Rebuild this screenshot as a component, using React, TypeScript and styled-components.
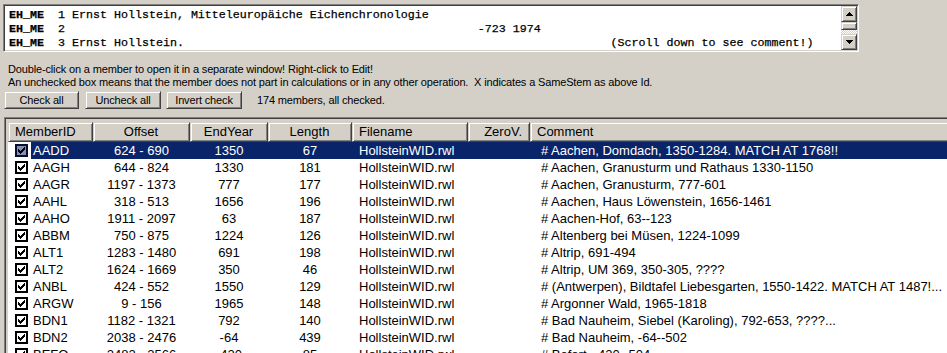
import React from 'react';
import styled, { createGlobalStyle, css } from 'styled-components';

const Global = createGlobalStyle`
  html, body { margin: 0; padding: 0; background: #d4d0c8; overflow: hidden; }
  body { font-family: "Liberation Sans", Arial, sans-serif; }
`;

const Page = styled.div`
  width: 947px;
  height: 353px;
  overflow: hidden;
  box-sizing: border-box;
  padding: 4px 0 0 3px;
  display: flex;
  flex-direction: column;
`;

const Memo = styled.div`
  width: 856px;
  height: 48px;
  flex: none;
  box-sizing: border-box;
  border: 1px solid;
  border-color: #808080 #ffffff #ffffff #808080;
  box-shadow: inset 1px 1px #404040, inset -1px -1px #d4d0c8;
  background: #fff;
  padding: 1px;
  display: flex;
`;

const MemoText = styled.pre`
  flex: 1;
  margin: 0;
  padding: 2px 0 0 4px;
  font-family: "Liberation Mono", "Courier New", monospace;
  font-size: 11.67px;
  line-height: 14px;
  color: #000;
  -webkit-text-stroke: 0.25px #000;
  overflow: hidden;
`;

const Bold = styled.b`
  font-weight: bold;
`;

const VScroll = styled.div`
  width: 16px;
  display: flex;
  flex-direction: column;
`;

const raised = css`
  box-sizing: border-box;
  background: #d4d0c8;
  border: 1px solid;
  border-color: #d4d0c8 #404040 #404040 #d4d0c8;
  box-shadow: inset 1px 1px #ffffff, inset -1px -1px #808080;
`;

const ScrollBtn = styled.div`
  ${raised};
  height: 16px;
  flex: none;
  display: flex;
  align-items: center;
  justify-content: center;
`;

const Thumb = styled.div`
  ${raised};
  height: 8px;
  flex: none;
`;

const Track = styled.div`
  flex: 1;
  background-color: #d4d0c8;
  background-image: repeating-conic-gradient(#ffffff 0 25%, #d4d0c8 0 50%);
  background-size: 2px 2px;
`;

const Info = styled.div`
  margin-top: 11px;
  padding-left: 5px;
  font-size: 11px;
  letter-spacing: -0.15px;
  line-height: 13px;
  color: #000;
`;

const ButtonRow = styled.div`
  margin-top: 2px;
  margin-left: 1px;
  display: flex;
  align-items: center;
  height: 18px;
`;

const Button = styled.button<{ $w: number; $gap: number }>`
  ${raised};
  width: ${(p) => p.$w}px;
  height: 18px;
  margin-right: ${(p) => p.$gap}px;
  padding: 0;
  font-family: "Liberation Sans", Arial, sans-serif;
  font-size: 11px;
  letter-spacing: -0.15px;
  color: #000;
`;

const Status = styled.span`
  margin-left: 10px;
  font-size: 11px;
  letter-spacing: -0.15px;
  color: #000;
`;

const Frame = styled.div`
  margin-top: 8px;
  margin-left: 1px;
  width: 1000px;
  flex: 1;
  box-sizing: border-box;
  border-top: 1px solid #808080;
  border-left: 1px solid #808080;
  box-shadow: inset 1px 1px #404040;
  padding: 4px 0 0 3px;
  display: flex;
  flex-direction: column;
`;

const COLS = '23px 62px 97px 78px 84px 116px 62px 1fr';

const HeaderRow = styled.div`
  display: grid;
  grid-template-columns: 85px 97px 78px 84px 116px 62px 1fr;
  height: 20px;
  flex: none;
`;

const HeadCell = styled.div<{ $align: 'left' | 'center' | 'right' }>`
  ${raised};
  font-size: 13px;
  line-height: 18px;
  color: #000;
  text-align: ${(p) => p.$align};
  padding: 0 7px 0 6px;
  white-space: nowrap;
  overflow: hidden;
`;

const Body = styled.div`
  flex: 1;
  background: #fff;
`;

const Row = styled.div`
  display: grid;
  grid-template-columns: ${COLS};
  height: 17px;
  font-size: 13px;
  line-height: 17px;
`;

const CheckCell = styled.div`
  background: #fff;
  display: flex;
  align-items: center;
  padding-left: 7px;
`;

const Box = styled.div<{ $sel: boolean }>`
  width: 13px;
  height: 13px;
  box-sizing: border-box;
  border: 2px solid ${(p) => (p.$sel ? '#050f30' : '#000')};
  background: ${(p) => (p.$sel ? '#8790b3' : '#fff')};
  display: flex;
  align-items: center;
  justify-content: center;
`;

const Cell = styled.div<{ $sel: boolean; $align: 'left' | 'center' | 'right'; $pl?: number }>`
  background: ${(p) => (p.$sel ? '#0a246a' : '#fff')};
  color: ${(p) => (p.$sel ? '#fff' : '#000')};
  text-align: ${(p) => p.$align};
  padding-left: ${(p) => p.$pl ?? 0}px;
  white-space: nowrap;
  overflow: hidden;
`;

type Member = [string, string, string, string, string];

const members: Member[] = [
  ['AADD', '624 - 690', '1350', '67', '# Aachen, Domdach, 1350-1284. MATCH AT 1768!!'],
  ['AAGH', '644 - 824', '1330', '181', '# Aachen, Granusturm und Rathaus 1330-1150'],
  ['AAGR', '1197 - 1373', '777', '177', '# Aachen, Granusturm, 777-601'],
  ['AAHL', '318 - 513', '1656', '196', '# Aachen, Haus Löwenstein, 1656-1461'],
  ['AAHO', '1911 - 2097', '63', '187', '# Aachen-Hof, 63--123'],
  ['ABBM', '750 - 875', '1224', '126', '# Altenberg bei Müsen, 1224-1099'],
  ['ALT1', '1283 - 1480', '691', '198', '# Altrip, 691-494'],
  ['ALT2', '1624 - 1669', '350', '46', '# Altrip, UM 369, 350-305, ????'],
  ['ANBL', '424 - 552', '1550', '129', '# (Antwerpen), Bildtafel Liebesgarten, 1550-1422. MATCH AT 1487!...'],
  ['ARGW', '9 - 156', '1965', '148', '# Argonner Wald, 1965-1818'],
  ['BDN1', '1182 - 1321', '792', '140', '# Bad Nauheim, Siebel (Karoling), 792-653, ????...'],
  ['BDN2', '2038 - 2476', '-64', '439', '# Bad Nauheim, -64--502'],
  ['BEFO', '2482 - 2566', '-420', '85', '# Befort, -420--504'],
];

const Check = () => (
  <svg width="7" height="7" viewBox="0 0 7 7">
    <path d="M0 2h1v1h1v1h1V3h1V2h1V1h1V0h1v3H6v1H5v1H4v1H3v1H2V6H1V5H0z" fill="#000" />
  </svg>
);

const line = (a: string, b: string, col: number) => a + ' '.repeat(Math.max(1, col - a.length)) + b;

export default function App() {
  const l2 = line('  2', '-723 1974', 62);
  const l3 = line('  3 Ernst Hollstein.', '(Scroll down to see comment!)', 81);
  return (
    <>
      <Global />
      <Page>
        <Memo>
          <MemoText>
            <Bold>EH_ME</Bold>{'  1 Ernst Hollstein, Mitteleuropäiche Eichenchronologie'}
            {'\n'}
            <Bold>EH_ME</Bold>{l2}
            {'\n'}
            <Bold>EH_ME</Bold>{l3}
          </MemoText>
          <VScroll>
            <ScrollBtn>
              <svg width="7" height="4" viewBox="0 0 7 4"><path d="M3 0h1v1h1v1h1v1h1v1H0V3h1V2h1V1h1z" fill="#000" /></svg>
            </ScrollBtn>
            <Thumb />
            <Track />
            <ScrollBtn>
              <svg width="7" height="4" viewBox="0 0 7 4"><path d="M0 0h7v1H6v1H5v1H4v1H3V3H2V2H1V1H0z" fill="#000" /></svg>
            </ScrollBtn>
          </VScroll>
        </Memo>
        <Info>
          Double-click on a member to open it in a separate window! Right-click to Edit!
          <br />
          An unchecked box means that the member does not part in calculations or in any other operation.&nbsp; X indicates a SameStem as above Id.
        </Info>
        <ButtonRow>
          <Button $w={75} $gap={6}>Check all</Button>
          <Button $w={76} $gap={5}>Uncheck all</Button>
          <Button $w={76} $gap={5}>Invert check</Button>
          <Status>174 members, all checked.</Status>
        </ButtonRow>
        <Frame>
          <HeaderRow>
            <HeadCell $align="left">MemberID</HeadCell>
            <HeadCell $align="center">Offset</HeadCell>
            <HeadCell $align="center">EndYear</HeadCell>
            <HeadCell $align="center">Length</HeadCell>
            <HeadCell $align="left">Filename</HeadCell>
            <HeadCell $align="right">ZeroV.</HeadCell>
            <HeadCell $align="left">Comment</HeadCell>
          </HeaderRow>
          <Body>
            {members.map((m, i) => {
              const sel = i === 0;
              return (
                <Row key={m[0]}>
                  <CheckCell>
                    <Box $sel={sel}><Check /></Box>
                  </CheckCell>
                  <Cell $sel={sel} $align="left" $pl={2}>{m[0]}</Cell>
                  <Cell $sel={sel} $align="center">{m[1]}</Cell>
                  <Cell $sel={sel} $align="center">{m[2]}</Cell>
                  <Cell $sel={sel} $align="center">{m[3]}</Cell>
                  <Cell $sel={sel} $align="left" $pl={7}>HollsteinWID.rwl</Cell>
                  <Cell $sel={sel} $align="left" />
                  <Cell $sel={sel} $align="left" $pl={11}>{m[4]}</Cell>
                </Row>
              );
            })}
          </Body>
        </Frame>
      </Page>
    </>
  );
}
